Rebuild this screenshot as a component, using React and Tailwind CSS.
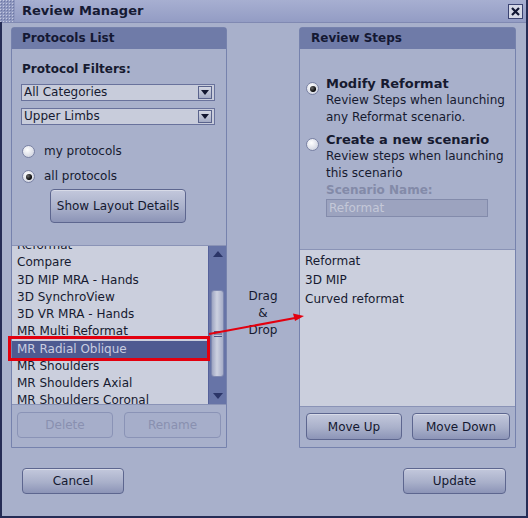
import React from 'react';

const font = { fontFamily: '"DejaVu Sans", Verdana, sans-serif' };

function Radio({ checked }) {
  return (
    <span className="relative inline-block w-[13px] h-[13px] rounded-full border border-[#7a82a4] bg-[radial-gradient(circle_at_40%_35%,#ffffff,#d6d9e4_70%,#b9bdd0)] shrink-0">
      {checked && (
        <span className="absolute left-[3px] top-[3px] w-[6px] h-[6px] rounded-full bg-[radial-gradient(circle_at_35%_35%,#6a6a6a,#000000_70%)]" />
      )}
    </span>
  );
}

function Button({ children, disabled, className = '' }) {
  return disabled ? (
    <div className={`flex items-center justify-center rounded-[4px] border border-[#8a93b6] bg-[#a6aeca] text-[#8990b0] text-[12px] ${className}`}>
      {children}
    </div>
  ) : (
    <div className={`flex items-center justify-center rounded-[4px] border border-[#5d668f] bg-[linear-gradient(#c3c8dc,#a9b0ca_55%,#8c94b7)] text-[#141830] text-[12px] shadow-[inset_0_1px_0_#d8dbe8] ${className}`}>
      {children}
    </div>
  );
}

function Select({ value }) {
  return (
    <div className="flex items-center h-[17px] w-[194px] border border-[#69729c] bg-[#c8ccdb] pl-[2px] pr-[2px] text-[12px] text-[#161a30]">
      <span className="flex-1 leading-[15px]">{value}</span>
      <span className="flex items-center justify-center w-[14px] h-[13px] border border-[#5a638c] bg-[linear-gradient(#d4d7e3,#a4abc5)]">
        <svg width="8" height="5" viewBox="0 0 8 5"><path d="M0 0h8L4 5z" fill="#121630" /></svg>
      </span>
    </div>
  );
}

function PanelHeader({ children, pl }) {
  return (
    <div className={`h-[21px] bg-[#6f7ba8] text-[12px] font-bold text-[#141833] leading-[21px] ${pl}`}>{children}</div>
  );
}

const protocols = [
  'Reformat',
  'Compare',
  '3D MIP MRA - Hands',
  '3D SynchroView',
  '3D VR MRA - Hands',
  'MR Multi Reformat',
  'MR Radial Oblique',
  'MR Shoulders',
  'MR Shoulders Axial',
  'MR Shoulders Coronal',
];

function ScrollBar() {
  return (
    <div className="w-[18px] flex flex-col bg-[#6774a7] border-l border-[#55619a]">
      <div className="h-[16px] flex items-center justify-center">
        <svg width="10" height="6" viewBox="0 0 10 6"><path d="M0 6h10L5 0z" fill="#2b3568" /></svg>
      </div>
      <div className="h-[28px]" />
      <div className="h-[87px] mx-[2px] rounded-[3px] border border-[#7e88b0] bg-[linear-gradient(90deg,#9ea5c2,#cdd1e0_45%,#a6adc8)] flex items-center justify-center">
        <svg width="8" height="6" viewBox="0 0 8 6"><path d="M0 .5h8M0 3h8M0 5.5h8" stroke="#4a5384" strokeWidth="1" /></svg>
      </div>
      <div className="flex-1" />
      <div className="h-[16px] flex items-center justify-center">
        <svg width="10" height="6" viewBox="0 0 10 6"><path d="M0 0h10L5 6z" fill="#2b3568" /></svg>
      </div>
    </div>
  );
}

export default function App() {
  return (
    <div className="relative w-[528px] h-[518px] bg-[#a8b0cb] border-x-2 border-b-2 border-[#252c55] flex flex-col text-[#161a30]" style={font}>
      {/* Title bar */}
      <div className="h-[23px] flex items-center bg-[linear-gradient(#a7afd1,#939cc4)] border-b border-[#8089b2]">
        <svg width="15" height="22" className="-ml-[2px]">
          <defs>
            <pattern id="dots" width="3" height="3" patternUnits="userSpaceOnUse">
              <rect width="3" height="3" fill="#8e97bf" />
              <rect width="1" height="1" fill="#c5cae0" />
              <rect x="1" y="1" width="1" height="1" fill="#6c76a2" />
            </pattern>
          </defs>
          <rect width="15" height="22" fill="url(#dots)" />
        </svg>
        <span className="ml-[7px] text-[13px] font-bold text-[#161a33]">Review Manager</span>
        <span className="ml-auto mr-[3px] w-[15px] h-[15px] border border-[#3b4372] bg-[#d5d8e6] flex items-center justify-center">
          <svg width="9" height="9" viewBox="0 0 9 9"><path d="M1 1l7 7M8 1L1 8" stroke="#111633" strokeWidth="2.2" /></svg>
        </span>
      </div>

      {/* Panels */}
      <div className="flex mt-[4px] ml-[9px]">
        {/* Protocols list */}
        <div className="w-[216px] h-[421px] border border-[#7682ad] rounded-t-[3px] flex flex-col">
          <PanelHeader pl="pl-[10px]">Protocols List</PanelHeader>
          <div className="mt-[13px] ml-[10px] text-[12px] font-bold leading-[14px]">Protocol Filters:</div>
          <div className="mt-[8px] ml-[9px]"><Select value="All Categories" /></div>
          <div className="mt-[7px] ml-[9px]"><Select value="Upper Limbs" /></div>
          <div className="mt-[18px] ml-[10px] h-[16px] flex items-center gap-[9px] text-[12px]">
            <Radio /> <span>my protocols</span>
          </div>
          <div className="mt-[9px] ml-[10px] h-[16px] flex items-center gap-[9px] text-[12px]">
            <Radio checked /> <span>all protocols</span>
          </div>
          <Button className="mt-[5px] ml-[38px] w-[136px] h-[34px]">Show Layout Details</Button>
          <div className="mt-[22px] h-[160px] flex bg-[#cbcfdd] border-y border-[#8a93b6]">
            <div className="flex-1 overflow-hidden text-[12px]">
              <div className="-mt-[9px]">
                {protocols.map((p) => (
                  <div
                    key={p}
                    className={`h-[17.25px] leading-[17.25px] pl-[5px] whitespace-nowrap ${p === 'MR Radial Oblique' ? 'bg-[#4e5a91] text-[#c9cde0]' : ''}`}
                  >
                    {p}
                  </div>
                ))}
              </div>
            </div>
            <ScrollBar />
          </div>
          <div className="mt-[7px] ml-[5px] flex gap-[11px]">
            <Button disabled className="w-[96px] h-[26px]">Delete</Button>
            <Button disabled className="w-[97px] h-[26px]">Rename</Button>
          </div>
        </div>

        {/* Drag & drop label */}
        <div className="w-[72px] flex flex-col items-center pt-[261px] text-[12px] leading-[17px] text-center">
          <span>Drag</span>
          <span>&amp;</span>
          <span>Drop</span>
        </div>

        {/* Review steps */}
        <div className="w-[217px] h-[421px] border border-[#7682ad] rounded-t-[3px] flex flex-col">
          <PanelHeader pl="pl-[11px]">Review Steps</PanelHeader>
          <div className="mt-[27px] ml-[6px] flex gap-[7px]">
            <div className="pt-[2px]"><Radio checked /></div>
            <div>
              <div className="text-[13px] font-bold leading-[16px]">Modify Reformat</div>
              <div className="text-[12px] leading-[17px]">Review Steps when launching</div>
              <div className="text-[12px] leading-[17px]">any Reformat scenario.</div>
            </div>
          </div>
          <div className="mt-[6px] ml-[6px] flex gap-[7px]">
            <div className="pt-[2px]"><Radio /></div>
            <div>
              <div className="text-[13px] font-bold leading-[16px]">Create a new scenario</div>
              <div className="text-[12px] leading-[17px]">Review steps when launching</div>
              <div className="text-[12px] leading-[17px]">this scenario</div>
              <div className="text-[12px] font-bold leading-[16px] text-[#838aa8]">Scenario Name:</div>
              <div className="mt-[1px] w-[162px] h-[18px] border border-[#838bab] bg-[#9ca3bf] text-[12px] leading-[16px] pl-[2px] text-[#c4c8d8]">Reformat</div>
            </div>
          </div>
          <div className="mt-[32px] h-[158px] bg-[#cbcfdd] border-y border-[#8a93b6] pt-[2px] pl-[5px] text-[12px] leading-[19px]">
            <div>Reformat</div>
            <div>3D MIP</div>
            <div>Curved reformat</div>
          </div>
          <div className="mt-[6px] ml-[6px] flex gap-[10px]">
            <Button className="w-[96px] h-[27px]">Move Up</Button>
            <Button className="w-[98px] h-[27px]">Move Down</Button>
          </div>
        </div>
      </div>

      {/* Bottom buttons */}
      <div className="mt-[20px] px-[20px] flex justify-between">
        <Button className="w-[102px] h-[26px]">Cancel</Button>
        <Button className="w-[103px] h-[26px]">Update</Button>
      </div>

      {/* Annotation overlay */}
      <div className="absolute left-[6px] top-[336px] w-[202px] h-[25px] border-[3px] border-[#e3000f] pointer-events-none" />
      <svg className="absolute left-[-2px] top-0 pointer-events-none" width="528" height="518">
        <path d="M209 334L295 318" stroke="#e3000f" strokeWidth="2" />
        <path d="M304 316L293 313.5L295 321z" fill="#e3000f" />
      </svg>
    </div>
  );
}
